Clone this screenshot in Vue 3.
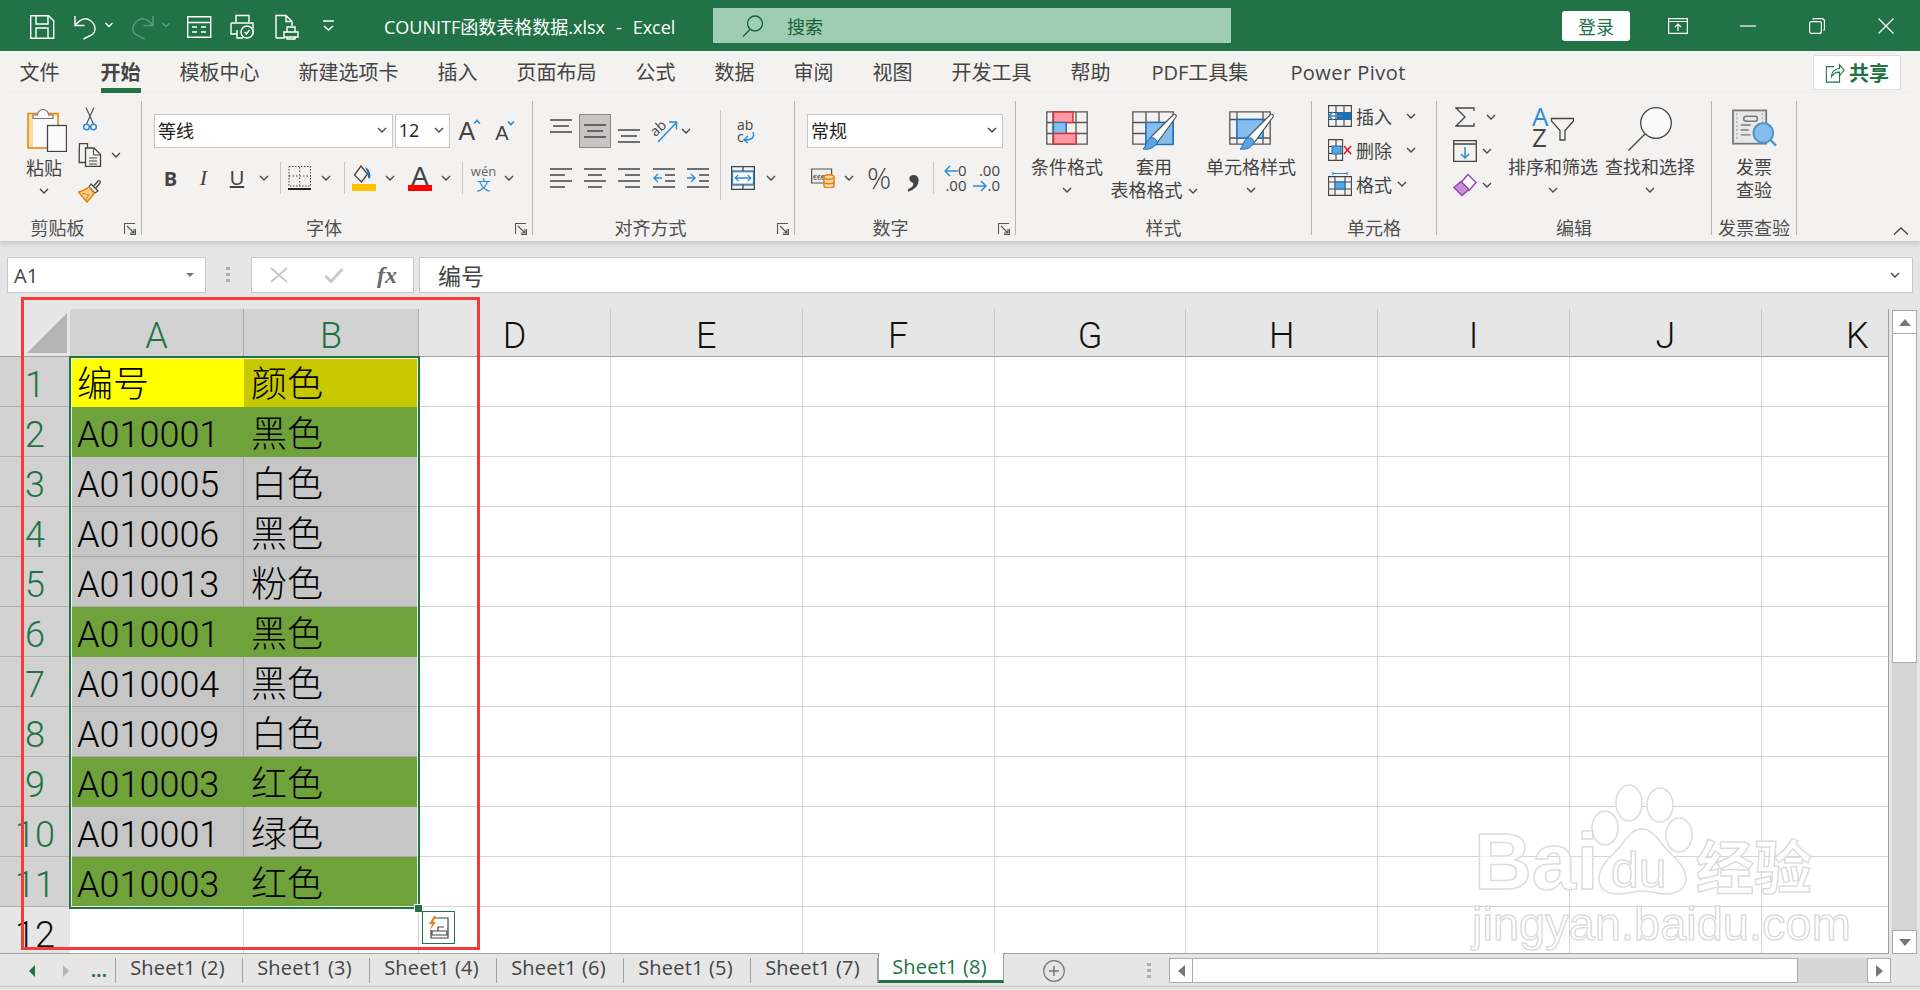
<template>
  <div class="excel">
    <header class="titlebar">
      <svg class="qat" viewBox="25 0 315 51" fill="none" stroke="#fff" stroke-width="1.4">
        <path d="M30.7 15.7h18l5 5v17.6h-23z" />
        <path d="M36 16v8h12v-8M36 38V28h12v10" />
        <path d="M75 16v9.500h9.500M75.500 25c5-6 10-7.500 14-5 7 4 7 12 2 15l-8 4" />
        <path d="M105.500 23l3.500 3.500 3.500-3.500" stroke-width="1.300" />
        <g stroke="#5d9c7b">
          <path d="M153 16v9.500h-9.500M152.500 25c-5-6-10-7.500-14-5-7 4-7 12-2 15l8 4" />
          <path d="M162.500 23l3.500 3.500 3.500-3.500" stroke-width="1.300" />
        </g>
        <path d="M187.700 16.700h23v20.600h-23zM187.700 22.500h23M192 27h5M201 27h5M192 32h5M201 32h5" />
        <path d="M236 22v-6.500h13V22M231 23h22v11h-7M231 23v11h6M237 30v8h6" />
        <circle cx="247" cy="32" r="6" fill="#217346" />
        <path d="M244.500 32l2 2 3-4" />
        <path d="M276 38V15.500h10l6 6V26M286 15.500v6h6M276 38h9" />
        <path d="M284 32h14v5h-14zM287 32v-5h8v5M287 37v2h8v-2" />
        <path d="M323 21h11M324 26l4.500 4 4.500-4" />
      </svg>
      <div class="doc-title">COUNITF函数表格数据.xlsx&nbsp; - &nbsp;Excel</div>
      <div class="search">
        <svg class="search-ico" viewBox="0 0 22 22" fill="none" stroke="#1d5a36" stroke-width="1.300">
          <circle cx="13" cy="8.500" r="7.500" />
          <path d="M8 14.500L1 21.500" />
        </svg>
        <span>搜索</span>
      </div>
      <button class="login">登录</button>
      <svg class="win win-ribbon" viewBox="0 0 20 16" fill="none" stroke="#fff" stroke-width="1.200">
        <path d="M.6.600h18.800v14.800H.6zM.6 3.500h18.800M10 13V6.500M7 9l3-3 3 3" />
      </svg>
      <svg class="win win-min" viewBox="0 0 16 16" fill="none" stroke="#fff" stroke-width="1.200"><path d="M0 8h16" /></svg>
      <svg class="win win-max" viewBox="0 0 16 16" fill="none" stroke="#fff" stroke-width="1.200">
        <rect x=".6" y="3.600" width="11.800" height="11.800" rx="2" />
        <path d="M3.500 1.500c.5-.6 1-.9 2-.9h7c1.700 0 3 1.300 3 3v7c0 1-.3 1.500-.9 2" />
      </svg>
      <svg class="win win-close" viewBox="0 0 16 16" fill="none" stroke="#fff" stroke-width="1.200"><path d="M.5.500l15 15M15.500.500l-15 15" /></svg>
    </header>

    <nav class="tabs">
      <span v-for="t in tabs" :key="t" class="tab" :class="{ on: t === '开始' }">{{ t }}</span>
      <button class="share">
        <svg class="share-ico" viewBox="0 0 22 24" fill="none" stroke="#217346" stroke-width="1.200">
          <path d="M10 5H1.500v17H16v-9" />
          <path d="M7 16c0-5 4-9 9-9V3l5 6-5 6v-4c-4 0-7 1.500-9 5z" />
        </svg>
        共享
      </button>
    </nav>

    <section class="ribbon">
      <!-- 剪贴板 -->
      <div class="group g-clip">
        <div class="body">
          <div class="paste">
            <svg class="ico-paste" viewBox="0 0 40 45">
              <rect x="1" y="6.500" width="30" height="34.500" fill="#fbdf9e" stroke="#e5820e" stroke-width="1.500" />
              <rect x="6" y="9" width="24" height="31" fill="#fafafa" />
              <path d="M6 11.500V8h4.500a5.500 5.500 0 0 1 11 0H26v3.500z" fill="#fafafa" stroke="#777" stroke-width="1.200" />
              <rect x="20.500" y="18.500" width="19" height="26" fill="#fafafa" stroke="#444" stroke-width="1.300" />
            </svg>
            <span class="txt">粘贴</span>
            <Chev />
          </div>
          <div class="clip-tools">
            <svg class="ico-cut" viewBox="0 0 14 24" fill="none" stroke-width="1.200">
              <path d="M3 .500l7.500 16.500M11 .500L3.500 17" stroke="#555" />
              <circle cx="3.500" cy="20" r="2.800" stroke="#2b8dd6" stroke-width="1.500" />
              <circle cx="10.500" cy="20" r="2.800" stroke="#2b8dd6" stroke-width="1.500" />
            </svg>
            <div class="copy-row">
              <svg class="ico-24" viewBox="0 0 24 24" fill="none" stroke="#444" stroke-width="1.300">
                <path d="M7.500 19.500H1.200c0-6 0-12 .3-19h8v4" />
                <path d="M7.500 5h8.500l6.500 6.500v12h-15z" />
                <path d="M15.500 5.500v6.500h7M11 15h8M11 18h8M11 21h8" stroke-width="1" />
              </svg>
              <Chev class="copy-chev" />
            </div>
            <svg class="ico-24 brush" viewBox="0 0 24 24" fill="none">
              <path d="M15 8l5-6c1-1 3 .5 2 2l-5 6z" stroke="#444" stroke-width="1.300" />
              <path d="M13 5l7 7-3 2-6-6z" fill="#fff" stroke="#444" stroke-width="1.200" />
              <path d="M11 8l5 6c-1 3-5 6-7 9L.5 13c3-.5 7-2.500 10.500-5z" fill="#f8cf8e" stroke="#e5820e" stroke-width="1.500" />
              <path d="M4 14l6 2M8 21l3-6" stroke="#e5820e" />
            </svg>
          </div>
        </div>
        <div class="label">剪贴板</div>
        <Launcher />
      </div>

      <!-- 字体 -->
      <div class="group g-font">
        <div class="body col">
          <div class="row-1 font-row">
            <div class="select sel-font">等线<Chev /></div>
            <div class="select sel-size">12<Chev /></div>
            <div class="grow-a">A<svg class="caret" viewBox="0 0 8 5" fill="none" stroke="#2b8dd6" stroke-width="1.600"><path d="M1 4.500L4 1.500l3 3" /></svg></div>
            <div class="grow-a small">A<svg class="caret" viewBox="0 0 8 5" fill="none" stroke="#2b8dd6" stroke-width="1.600"><path d="M1 .500L4 3.500l3-3" /></svg></div>
          </div>
          <div class="row-2 font-tools">
            <b class="fb">B</b>
            <i class="fi">I</i>
            <u class="fu">U</u>
            <Chev />
            <span class="vsep" />
            <svg class="ico-24 tall" viewBox="0 0 24 24" fill="none">
              <path d="M1 .500h21.500V20H1z" stroke="#444" stroke-dasharray="1.500 1.500" />
              <path d="M11.700 1v19M1 10h22" stroke="#444" stroke-dasharray="1.500 2" />
              <path d="M0 23h23" stroke="#222" stroke-width="2" />
            </svg>
            <Chev />
            <span class="vsep" />
            <svg class="ico-24 tall" viewBox="0 0 24 26" fill="none">
              <path d="M9 1L2.500 10l7 7 6-8z" stroke="#444" stroke-width="1.300" />
              <path d="M13 2c3 1 5 4 5.500 9 0 2-1.500 3-2.500 2 .5-4-1-7-3-11z" fill="#1c6fb5" />
              <rect y="19" width="24" height="7" fill="#ffc000" />
            </svg>
            <Chev />
            <div class="font-color">A<span class="bar" /></div>
            <Chev />
            <span class="vsep" />
            <div class="wen"><span>wén</span><em>文</em></div>
            <Chev />
          </div>
        </div>
        <div class="label">字体</div>
        <Launcher />
      </div>

      <!-- 对齐方式 -->
      <div class="group g-align">
        <div class="body">
          <div class="col">
            <div class="row-1 align-1">
              <svg class="ico-lines top" viewBox="0 0 22 14" stroke="#444" stroke-width="1.400"><path d="M0 1h22M3 7h16M0 13h22" /></svg>
              <span class="active-box"><svg class="ico-lines" viewBox="0 0 22 14" stroke="#444" stroke-width="1.400"><path d="M0 1h22M3 7h16M0 13h22" /></svg></span>
              <svg class="ico-lines bottom" viewBox="0 0 22 14" stroke="#444" stroke-width="1.400"><path d="M0 1h22M3 7h16M0 13h22" /></svg>
              <svg class="ico-orient" viewBox="0 0 26 24" fill="none">
                <text x="0" y="14" transform="rotate(-42 7 12)" class="svg-txt" fill="#444">ab</text>
                <path d="M6 23L24 4M17 3h7.500v7.500" stroke="#2b8dd6" stroke-width="1.500" />
              </svg>
              <Chev />
            </div>
            <div class="row-2 align-2">
              <svg class="ico-lines h20" viewBox="0 0 22 20" stroke="#444" stroke-width="1.400"><path d="M0 1h22M0 7h15M0 13h22M0 19h15" /></svg>
              <svg class="ico-lines h20" viewBox="0 0 22 20" stroke="#444" stroke-width="1.400"><path d="M0 1h22M4 7h14M0 13h22M4 19h14" /></svg>
              <svg class="ico-lines h20" viewBox="0 0 22 20" stroke="#444" stroke-width="1.400"><path d="M0 1h22M7 7h15M0 13h22M7 19h15" /></svg>
              <svg class="ico-lines h20" viewBox="0 0 22 20" fill="none" stroke-width="1.400">
                <path d="M0 1h22M12 7h10M12 13h10M0 19h22" stroke="#444" />
                <path d="M9 10H1M5 6l-4 4 4 4" stroke="#2b8dd6" />
              </svg>
              <svg class="ico-lines h20" viewBox="0 0 22 20" fill="none" stroke-width="1.400">
                <path d="M0 1h22M12 7h10M12 13h10M0 19h22" stroke="#444" />
                <path d="M0 10h8M4 6l4 4-4 4" stroke="#2b8dd6" />
              </svg>
            </div>
          </div>
          <span class="vsep long" />
          <div class="col align-right">
            <div class="row-1 wrap-cell">
              <svg class="ico-wrap" viewBox="0 0 20 24" fill="none">
                <text x="1" y="10" class="svg-txt" fill="#444">ab</text>
                <text x="1" y="22" class="svg-txt" fill="#444">c</text>
                <path d="M17 12c2 5-1 8-8 8M12 16l-4 4 4 3" stroke="#2b8dd6" stroke-width="1.500" />
              </svg>
            </div>
            <div class="row-2 merge-cell">
              <svg class="ico-24 tall" viewBox="0 0 23 23" fill="none" stroke="#444" stroke-width="1.200">
                <path d="M.6.600h21.800v21.800H.6zM.6 5h21.800M.6 18h21.800M11.500 1v4M11.500 18v4" />
                <rect x="1.500" y="5.500" width="20" height="12" fill="#fff" stroke="#2b8dd6" />
                <path d="M4 11.500h15M7 8.500l-3 3 3 3M16 8.500l3 3-3 3" stroke="#2b8dd6" />
              </svg>
              <Chev />
            </div>
          </div>
        </div>
        <div class="label">对齐方式</div>
        <Launcher />
      </div>

      <!-- 数字 -->
      <div class="group g-num">
        <div class="body col">
          <div class="row-1 num-row">
            <div class="select sel-num">常规<Chev /></div>
          </div>
          <div class="row-2 num-tools">
            <svg class="ico-24 acct" viewBox="0 0 24 20" fill="none">
              <path d="M.6 1h20v14H.6z" fill="#eee" stroke="#555" stroke-width="1.200" />
              <text x="2" y="12" class="svg-small" fill="#444">€€€</text>
              <path d="M13 9c0-3 10-3 10 0v9c0 2.500-10 2.500-10 0z" fill="#fbd7a5" stroke="#e5820e" stroke-width="1.500" />
              <path d="M13 9c0 3 10 3 10 0M13 13.500c0 3 10 3 10 0" stroke="#e5820e" stroke-width="1.300" />
            </svg>
            <Chev />
            <span class="pct">%</span>
            <span class="comma">,</span>
            <span class="vsep" />
            <div class="dec">
              <div><svg class="dec-arrow" viewBox="0 0 14 12" fill="none" stroke="#2b8dd6" stroke-width="1.500"><path d="M14 6H1M6 1L1 6l5 5" /></svg>0</div>
              <div>.00</div>
            </div>
            <div class="dec">
              <div class="end">.00</div>
              <div><svg class="dec-arrow" viewBox="0 0 14 12" fill="none" stroke="#2b8dd6" stroke-width="1.500"><path d="M0 6h13M8 1l5 5-5 5" /></svg>.0</div>
            </div>
          </div>
        </div>
        <div class="label">数字</div>
        <Launcher />
      </div>

      <!-- 样式 -->
      <div class="group g-style">
        <div class="body styles">
          <div class="big">
            <svg class="big-ico cond" viewBox="0 0 42 34" fill="none">
              <path d="M.8.800h40.400v32.400H.8zM.8 11.500h40.400M.8 22.500h40.400M7 1v32M20 1v32M30 1v32" stroke="#555" stroke-width="1.300" />
              <rect x="7.500" y="1" width="19.500" height="10.500" fill="#ff99a3" stroke="#d92b2b" stroke-width="1.400" />
              <rect x="7.500" y="11.500" width="12.500" height="11" fill="#85bdee" stroke="#1a72bf" stroke-width="1.200" />
              <rect x="7.500" y="22.500" width="22.500" height="10.500" fill="#ff99a3" stroke="#d92b2b" stroke-width="1.400" />
            </svg>
            <span class="txt">条件格式</span>
            <Chev />
          </div>
          <div class="big">
            <svg class="big-ico" viewBox="0 0 45 39" fill="none">
              <path d="M.8.800h40.400v32.400H.8zM.8 11.500h40.400M.8 22.500h40.400M14 1v32M27 1v32" stroke="#555" stroke-width="1.300" />
              <rect x="14" y="11.500" width="27" height="22" fill="#85bdee" stroke="#1a72bf" stroke-width="1.400" />
              <path d="M18 27L41 4c1.500-1.500 4-.5 3 2L25 32z" fill="#fff" stroke="#555" stroke-width="1.200" />
              <path d="M18 27c4-1 7 1 7 5-3 5-8 7-14 6 3-2 3-8 7-11z" fill="#5ba4e0" stroke="#1a72bf" />
            </svg>
            <span class="txt">套用</span>
            <span class="txt with-chev">表格格式<Chev /></span>
          </div>
          <div class="big">
            <svg class="big-ico" viewBox="0 0 45 39" fill="none">
              <path d="M.8.800h40.400v32.400H.8zM.8 8.500h40.400M.8 27h40.400M8 1v32M34 1v32" stroke="#555" stroke-width="1.300" />
              <rect x="8" y="8.500" width="26" height="18.500" fill="#85bdee" stroke="#1a72bf" stroke-width="1.400" />
              <path d="M18 27L41 4c1.500-1.500 4-.5 3 2L25 32z" fill="#fff" stroke="#555" stroke-width="1.200" />
              <path d="M18 27c4-1 7 1 7 5-3 5-8 7-14 6 3-2 3-8 7-11z" fill="#5ba4e0" stroke="#1a72bf" />
            </svg>
            <span class="txt">单元格样式</span>
            <Chev />
          </div>
        </div>
        <div class="label">样式</div>
      </div>

      <!-- 单元格 -->
      <div class="group g-cells">
        <div class="body col cells">
          <div class="cell-btn">
            <svg class="ico-24 tall" viewBox="0 0 24 22" fill="none">
              <path d="M.6.600h22.800v20.800H.6zM.6 7.500h22.800M.6 14.500h22.800M8 1v20M16 1v20" stroke="#444" stroke-width="1.100" />
              <rect x="9" y="7" width="14" height="8" fill="#1c6fb5" />
              <path d="M14 11H1M5 7l-4 4 4 4" stroke="#2b8dd6" stroke-width="1.600" />
            </svg>
            <span>插入</span><Chev />
          </div>
          <div class="cell-btn">
            <svg class="ico-24 tall" viewBox="0 0 24 22" fill="none">
              <path d="M.6.600h14v20.800H.6zM.6 7.500h14M.6 14.500h14M8 1v20" stroke="#444" stroke-width="1.100" />
              <rect x="4" y="7" width="9" height="8" fill="#5ba4e0" stroke="#1c6fb5" />
              <path d="M16 7l7 8M23 7l-7 8" stroke="#e81123" stroke-width="1.500" />
            </svg>
            <span>删除</span><Chev />
          </div>
          <div class="cell-btn short">
            <svg class="ico-24 tall" viewBox="0 0 24 24" fill="none">
              <path d="M.6 4.600h22.800v18.800H.6zM.6 10h22.800M.6 17h22.800M7 5v18M17 5v18" stroke="#444" stroke-width="1.100" />
              <rect x="7" y="10" width="10" height="7" fill="#5ba4e0" stroke="#1c6fb5" />
              <path d="M5 1.500h14M5 0v3M19 0v3" stroke="#2b8dd6" stroke-width="1.200" />
            </svg>
            <span>格式</span><Chev />
          </div>
        </div>
        <div class="label">单元格</div>
      </div>

      <!-- 编辑 -->
      <div class="group g-edit">
        <div class="body edit">
          <div class="col edit-small">
            <div class="edit-btn">
              <svg class="ico-sigma" viewBox="0 0 20 20" fill="none" stroke="#444" stroke-width="1.300"><path d="M19 4V1H1l9 9-9 9h18v-3" /></svg>
              <Chev class="sigma-chev" />
            </div>
            <div class="edit-btn">
              <svg class="ico-24 tall" viewBox="0 0 24 22" fill="none">
                <path d="M.7.700h22.600v20.600H.7zM.7 4h22.600" stroke="#444" stroke-width="1.300" />
                <path d="M12 7v11M8 14l4 4 4-4" stroke="#2b8dd6" stroke-width="1.500" />
              </svg>
              <Chev />
            </div>
            <div class="edit-btn">
              <svg class="ico-24 tall" viewBox="0 0 24 23" fill="none">
                <path d="M15 1l8 8-7 8-8-8z" fill="#fff" stroke="#9c3fb0" stroke-width="1.400" />
                <path d="M8 8l8 8-7 6-8-8z" fill="#c98ed6" stroke="#9c3fb0" stroke-width="1.400" />
              </svg>
              <Chev />
            </div>
          </div>
          <div class="big">
            <svg class="big-ico sort" viewBox="0 0 42 41" fill="none">
              <text x="0" y="19" class="svg-az" fill="#2b8dd6">A</text>
              <text x="0" y="40" class="svg-az" fill="#444">Z</text>
              <path d="M19.500 11.500h22V14L33 23.500V33h-5v-9.500L19.500 14z" stroke="#444" stroke-width="1.300" />
            </svg>
            <span class="txt">排序和筛选</span>
            <Chev />
          </div>
          <div class="big">
            <svg class="big-ico find" viewBox="0 0 44 44" fill="none" stroke="#444" stroke-width="1.300">
              <circle cx="28" cy="16" r="15.300" fill="#fafafa" />
              <path d="M17 27L.5 43.500" />
            </svg>
            <span class="txt">查找和选择</span>
            <Chev />
          </div>
        </div>
        <div class="label">编辑</div>
      </div>

      <!-- 发票查验 -->
      <div class="group g-inv">
        <div class="body">
          <div class="big">
            <svg class="big-ico inv" viewBox="0 0 46 39" fill="none">
              <rect x="1" y="1" width="34" height="34" fill="#e8e8e8" stroke="#777" stroke-width="1.800" />
              <path d="M5 4v28M31 4v14" stroke="#999" stroke-dasharray="2 2" />
              <rect x="12" y="7" width="14" height="5" rx="2.500" stroke="#777" stroke-width="1.500" />
              <path d="M9 16h10M9 21h8M9 26h10" stroke="#777" stroke-width="1.500" />
              <circle cx="32" cy="24" r="10" fill="#85bdee" stroke="#4d93cf" stroke-width="2" />
              <path d="M39 31l6 6" stroke="#4d93cf" stroke-width="2.500" />
            </svg>
            <span class="txt">发票</span>
            <span class="txt">查验</span>
          </div>
        </div>
        <div class="label">发票查验</div>
      </div>

      <svg class="collapse" viewBox="0 0 16 8" fill="none" stroke="#444" stroke-width="1.300"><path d="M1 7.500L8 1l7 6.500" /></svg>
    </section>

    <section class="formula">
      <div class="namebox">
        <span>A1</span>
        <svg class="tri" viewBox="0 0 8 4"><path d="M0 0h8L4 4z" fill="#777" /></svg>
      </div>
      <span class="grip" />
      <div class="fx-box">
        <svg class="fx-x" viewBox="0 0 18 16" fill="none" stroke="#c8c8c8" stroke-width="2"><path d="M1 1l16 14M17 1L1 15" /></svg>
        <svg class="fx-ok" viewBox="0 0 20 16" fill="none" stroke="#c8c8c8" stroke-width="2.800"><path d="M1.500 9l5.500 5.500L18.500 2" /></svg>
        <i class="fx">fx</i>
      </div>
      <div class="fx-input">
        <span>编号</span>
        <Chev />
      </div>
    </section>

    <section class="sheet-wrap">
      <div class="sheet">
        <div class="corner">
          <svg class="corner-tri" viewBox="0 0 40 40"><path d="M40 0v40H0z" fill="#b5b5b5" /></svg>
        </div>
        <div class="col-head sel">A</div>
        <div class="col-head sel last">B</div>
        <div v-for="c in blankCols" :key="c" class="col-head">{{ c }}</div>

        <template v-for="(r, i) in rows" :key="i">
          <div class="row-head" :class="{ sel: i < 11 }">{{ i + 1 }}</div>
          <div class="cell" :class="[r.tone, { first: i === 0 }]">{{ r.code }}</div>
          <div class="cell" :class="[r.tone === 'head' ? 'head2' : r.tone]">{{ r.color }}</div>
          <div v-for="c in blankCols" :key="c" class="cell" />
        </template>

        <div class="selection" />
        <div class="fill-handle" />
        <div class="quick">
          <svg class="quick-ico" viewBox="0 0 22 24" fill="none">
            <path d="M6 2h14v20H3V14" stroke="#444" stroke-width="1.200" />
            <path d="M10 15v-4h6M4 15h15v4H4z" stroke="#444" stroke-width="1.200" />
            <path d="M6 0L1 8h3l-2 6 6-8H5l3-6z" fill="#e5820e" />
          </svg>
        </div>
      </div>
      <aside class="vscroll">
        <button class="sb-btn"><svg class="sb-arr" viewBox="0 0 12 7"><path d="M0 7L6 0l6 7z" fill="#777" /></svg></button>
        <div class="sb-thumb" />
        <div class="sb-track" />
        <button class="sb-btn"><svg class="sb-arr" viewBox="0 0 12 7"><path d="M0 0h12L6 7z" fill="#777" /></svg></button>
      </aside>
    </section>

    <footer class="sheetbar">
      <div class="sheet-nav">
        <svg class="nav-arr" viewBox="0 0 6 12"><path d="M6 0v12L0 6z" fill="#217346" /></svg>
        <svg class="nav-arr" viewBox="0 0 6 12"><path d="M0 0v12l6-6z" fill="#b5b5b5" /></svg>
        <span class="dots">...</span>
      </div>
      <span v-for="s in sheets" :key="s" class="sheet-tab">{{ s }}</span>
      <span class="sheet-tab active">Sheet1 (8)</span>
      <svg class="add" viewBox="0 0 22 22" fill="none" stroke="#777" stroke-width="1.200">
        <circle cx="11" cy="11" r="10.300" />
        <path d="M11 6v10M6 11h10" stroke-width="1.500" />
      </svg>
      <span class="grip" />
      <div class="hscroll">
        <button class="sb-btn"><svg class="sb-arr-h" viewBox="0 0 7 12"><path d="M7 0v12L0 6z" fill="#777" /></svg></button>
        <div class="hs-thumb" />
        <div class="hs-track" />
        <button class="sb-btn"><svg class="sb-arr-h" viewBox="0 0 7 12"><path d="M0 0v12l7-6z" fill="#777" /></svg></button>
      </div>
    </footer>

    <!-- 标注框 -->
    <div class="red-box" />

    <!-- 水印 -->
    <div class="watermark">
      <svg class="wm-paw" viewBox="1590 780 110 120" fill="#fff" stroke="#dcdcdc" stroke-width="1.500">
        <ellipse cx="1629" cy="803" rx="13" ry="18" />
        <ellipse cx="1660" cy="805" rx="13" ry="17" />
        <ellipse cx="1605" cy="828" rx="13" ry="17" />
        <ellipse cx="1679" cy="835" rx="13" ry="17" />
        <path d="M1642 829c-12 0-18 14-26 22-8 8-17 16-17 28 0 10 8 15 20 15 9 0 14-3 23-3s15 3 24 3c12 0 20-6 20-15 0-12-10-20-18-28-8-8-14-22-26-22z" />
      </svg>
      <span class="wm wm-bai">Bai</span>
      <span class="wm wm-du">du</span>
      <span class="wm wm-cn">经验</span>
      <span class="wm wm-url">jingyan.baidu.com</span>
    </div>
  </div>
</template>

<script setup>
import { h } from 'vue'

// 小箭头和右下角的扩展按钮到处都在用
const Chev = () =>
  h('svg', { class: 'chev', viewBox: '0 0 10 6', width: 10, height: 6, fill: 'none', stroke: '#444', 'stroke-width': 1.3 }, [
    h('path', { d: 'M1 1l4 4 4-4' })
  ])

const Launcher = () =>
  h('svg', { class: 'launcher', viewBox: '0 0 12 12', width: 12, height: 12, fill: 'none', stroke: '#555', 'stroke-width': 1.1 }, [
    h('path', { d: 'M11.500 6v5.500H6M.5 11V.5H11M3 3l7 7M10 6v4H6' })
  ])

const tabs = ['文件', '开始', '模板中心', '新建选项卡', '插入', '页面布局', '公式', '数据', '审阅', '视图', '开发工具', '帮助', 'PDF工具集', 'Power Pivot']

const blankCols = ['D', 'E', 'F', 'G', 'H', 'I', 'J', 'K']

const rows = [
  { code: '编号', color: '颜色', tone: 'head' },
  { code: 'A010001', color: '黑色', tone: 'green' },
  { code: 'A010005', color: '白色', tone: 'grey' },
  { code: 'A010006', color: '黑色', tone: 'grey' },
  { code: 'A010013', color: '粉色', tone: 'grey' },
  { code: 'A010001', color: '黑色', tone: 'green' },
  { code: 'A010004', color: '黑色', tone: 'grey' },
  { code: 'A010009', color: '白色', tone: 'grey' },
  { code: 'A010003', color: '红色', tone: 'green' },
  { code: 'A010001', color: '绿色', tone: 'grey' },
  { code: 'A010003', color: '红色', tone: 'green' },
  { code: '', color: '', tone: '' }
]

const sheets = ['Sheet1 (2)', 'Sheet1 (3)', 'Sheet1 (4)', 'Sheet1 (6)', 'Sheet1 (5)', 'Sheet1 (7)']
</script>

<style>
html,
body {
  margin: 0;
  background: #e6e6e6;
}
.chev {
  flex: none;
  display: block;
}
.launcher {
  position: absolute;
  right: 5px;
  bottom: 0;
}
</style>

<style scoped>
.excel {
  position: relative;
  width: 1920px;
  height: 990px;
  overflow: hidden;
  background: #e6e6e6;
  font-family: "Open Sans", "Noto Sans CJK SC", sans-serif;
  color: #444;
}
button {
  font-family: inherit;
  padding: 0;
  border: 0;
}
svg {
  display: block;
  flex: none;
}

/* 标题栏 */
.titlebar {
  height: 51px;
  background: #217346;
  display: flex;
  align-items: center;
  padding-left: 25px;
  box-sizing: border-box;
}
.qat {
  width: 315px;
  height: 51px;
}
.doc-title {
  width: 329px;
  margin-left: 44px;
  color: #fff;
  font-size: 18px;
  word-spacing: 0.8px;
  white-space: nowrap;
}
.search {
  width: 518px;
  height: 35px;
  background: #9fcdb4;
  display: flex;
  align-items: center;
  color: #1d5a36;
  font-size: 18px;
  padding-left: 29px;
  box-sizing: border-box;
}
.search-ico {
  width: 22px;
  height: 22px;
  margin-right: 23px;
}
.login {
  width: 68px;
  height: 30px;
  margin-left: 331px;
  background: #fff;
  color: #217346;
  border-radius: 3px;
  font-size: 18px;
}
.win-ribbon {
  width: 20px;
  height: 16px;
  margin-left: 38px;
}
.win-min {
  width: 16px;
  height: 16px;
  margin-left: 52px;
}
.win-max {
  width: 16px;
  height: 16px;
  margin-left: 53px;
}
.win-close {
  width: 16px;
  height: 16px;
  margin-left: 53px;
}

/* 选项卡 */
.tabs {
  height: 42px;
  background: #f3f2f1;
  display: flex;
  gap: 39px;
  padding-left: 19.5px;
  box-sizing: border-box;
  font-size: 20px;
}
.tab {
  height: 42px;
  box-sizing: border-box;
  padding-top: 8px;
  line-height: 28px;
  white-space: nowrap;
}
.tab:first-child {
  margin-right: 2px;
}
.tab:nth-child(13) {
  margin-left: 2px;
}
.tab:nth-child(14) {
  margin-left: 3px;
  letter-spacing: 0.45px;
}
.tab.on {
  font-weight: 700;
  border-bottom: 5px solid #217346;
}
.share {
  position: absolute;
  top: 55px;
  left: 1813px;
  width: 88px;
  height: 35px;
  background: #fff;
  border: 1px solid #e1dfdd;
  border-radius: 2px;
  color: #217346;
  font-size: 20px;
  font-weight: 700;
  display: flex;
  align-items: center;
  padding-left: 11px;
  gap: 4px;
  box-sizing: border-box;
}
.share-ico {
  width: 20px;
  height: 22px;
}

/* 功能区 */
.ribbon {
  position: relative;
  height: 148px;
  background: #f3f2f1;
  display: flex;
  padding-top: 8px;
  box-sizing: border-box;
  box-shadow: 0 3px 5px rgba(0, 0, 0, 0.14);
  z-index: 2;
  font-size: 18px;
}
.group {
  position: relative;
  height: 134px;
  box-sizing: border-box;
  border-right: 1px solid #b8b8b8;
  flex: none;
}
.body {
  height: 117px;
  display: flex;
}
.col {
  display: flex;
  flex-direction: column;
}
.label {
  line-height: 20px;
  height: 17px;
  text-align: center;
  white-space: nowrap;
  color: #505050;
}
.txt {
  line-height: 23px;
  white-space: nowrap;
}
.vsep {
  display: block;
  width: 1px;
  height: 32px;
  background: #c8c6c4;
}
.vsep.long {
  height: 90px;
  margin-top: 9px;
}
.g-clip { width: 142px; }
.g-font { width: 391px; }
.g-align { width: 262px; }
.g-num { width: 221px; }
.g-style { width: 296px; }
.g-cells { width: 125px; }
.g-edit { width: 275px; }
.g-inv { width: 85px; }
.g-clip .label,
.g-font .label,
.g-align .label,
.g-num .label { padding-right: 26px; }
.g-num .label { padding-right: 29px; }

.row-1 {
  height: 34px;
  margin-top: 13px;
}
.row-2 {
  height: 34px;
  margin-top: 13px;
  display: grid;
  align-items: center;
  justify-items: center;
}

/* 剪贴板 */
.paste {
  width: 48px;
  margin-left: 20px;
  display: flex;
  flex-direction: column;
  align-items: center;
  padding-top: 6px;
}
.ico-paste {
  width: 40px;
  height: 45px;
  margin-left: 6px;
  margin-bottom: 5px;
}
.paste .chev {
  margin-top: 8px;
}
.clip-tools {
  margin-left: 10px;
  padding-top: 6px;
}
.ico-cut {
  width: 14px;
  height: 24px;
  margin-left: 5px;
}
.copy-row {
  display: flex;
  align-items: center;
  margin-top: 12px;
}
.copy-chev {
  margin-left: 9px;
}
.ico-24 {
  width: 24px;
  height: 24px;
}
.brush {
  margin-top: 12px;
}

/* 字体 */
.font-row {
  display: flex;
  padding-left: 12px;
}
.select {
  height: 34px;
  box-sizing: border-box;
  background: #fff;
  border: 1px solid #c8c6c4;
  display: flex;
  align-items: center;
  justify-content: space-between;
  padding: 0 5px 2px 3px;
  color: #222;
  font-size: 18px;
}
.sel-font { width: 240px; }
.sel-size { width: 56px; margin-left: 2px; }
.grow-a {
  position: relative;
  font-size: 25px;
  line-height: 34px;
  margin-left: 8px;
  width: 37px;
  font-family: "Liberation Sans", sans-serif;
}
.grow-a.small {
  font-size: 20px;
  margin-left: 0;
  padding-top: 2px;
  box-sizing: border-box;
}
.caret {
  position: absolute;
  top: 5px;
  left: 15px;
  width: 8px;
  height: 5px;
}
.grow-a.small .caret {
  left: 12px;
  top: 7px;
}
.font-tools {
  grid-template-columns: 35px 31px 36px 18px 15px 24px 28px 8px 32px 20px 40px 12px 20px 23px 28px;
  padding-left: 11px;
}
.fb, .fi, .fu {
  font-family: "Liberation Sans", sans-serif;
  font-size: 20px;
}
.fb { font-family: "Open Sans", sans-serif; }
.fi { font-family: "Liberation Serif", serif; font-size: 22px; }
.ico-24.tall { height: 26px; }
.font-color {
  position: relative;
  width: 24px;
  height: 26px;
  text-align: center;
  font-size: 26px;
  line-height: 22px;
  font-family: "Liberation Sans", sans-serif;
}
.bar {
  position: absolute;
  left: 0;
  bottom: 0;
  width: 24px;
  height: 6px;
  background: #ff0000;
}
.wen {
  text-align: center;
  line-height: 14px;
  font-size: 13px;
  color: #666;
  white-space: nowrap;
}
.wen em {
  display: block;
  font-style: normal;
  color: #2b8dd6;
  font-size: 14px;
}

/* 对齐 */
.g-align .body {
  width: 261px;
}
.g-align .col:first-child {
  width: 187px;
}
.align-1 {
  display: grid;
  grid-template-columns: 34px 34px 34px 37px 6px;
  padding-left: 11px;
  align-items: center;
  justify-items: center;
}
.align-2 {
  grid-template-columns: 34px 34px 34px 36px 32px;
  padding-left: 11px;
}
.ico-lines {
  width: 22px;
  height: 14px;
}
.ico-lines.h20 { height: 20px; }
.ico-lines.top { margin-top: -11px; }
.ico-lines.bottom { margin-top: 10px; }
.active-box {
  width: 32px;
  height: 34px;
  box-sizing: border-box;
  background: #c8c6c4;
  border: 1px solid #8a8886;
  display: flex;
  align-items: center;
  justify-content: center;
}
.ico-orient {
  width: 26px;
  height: 24px;
  overflow: visible;
}
.svg-txt {
  font-family: "Open Sans", sans-serif;
  font-size: 14px;
}
.svg-small {
  font-family: "Liberation Sans", sans-serif;
  font-size: 7px;
}
.svg-az {
  font-family: "Open Sans", sans-serif;
  font-size: 26px;
}
.align-right {
  width: 73px;
}
.wrap-cell {
  padding-left: 15px;
  display: flex;
  align-items: flex-start;
  padding-top: 6px;
  box-sizing: border-box;
}
.ico-wrap {
  width: 20px;
  height: 24px;
}
.merge-cell {
  display: flex;
  align-items: center;
  justify-content: flex-start;
  padding-left: 10px;
  gap: 11px;
}

/* 数字 */
.num-row {
  padding-left: 12px;
}
.sel-num { width: 196px; }
.num-tools {
  grid-template-columns: 40px 12px 48px 22px 16px 25px 42px;
  padding-left: 8px;
}
.acct { height: 20px; }
.pct {
  font-size: 30px;
  font-family: "Open Sans", sans-serif;
  font-weight: 300;
  line-height: 34px;
}
.comma {
  font-family: "Liberation Serif", serif;
  font-weight: 700;
  font-size: 54px;
  line-height: 20px;
  margin-top: -26px;
}
.dec {
  font-family: "Open Sans", sans-serif;
  font-size: 15px;
  line-height: 15px;
  width: 26px;
}
.dec div {
  display: flex;
  align-items: center;
  justify-content: flex-end;
}
.dec-arrow {
  width: 14px;
  height: 12px;
}

/* 样式、编辑 大按钮 */
.styles {
  display: grid;
  grid-template-columns: 96px 78px 116px;
  padding-left: 3px;
}
.big {
  display: flex;
  flex-direction: column;
  align-items: center;
  white-space: nowrap;
  padding-top: 10px;
}
.big-ico {
  width: 45px;
  height: 39px;
  margin-bottom: 6px;
}
.big-ico.cond {
  width: 42px;
  height: 34px;
  margin-bottom: 11px;
}
.big-ico.sort {
  width: 42px;
  height: 41px;
  margin-top: -4px;
  margin-bottom: 8px;
}
.big-ico.find {
  width: 44px;
  height: 44px;
  margin-top: -4px;
  margin-bottom: 5px;
}
.big .chev {
  margin-top: 8px;
}
.with-chev {
  display: flex;
  align-items: center;
  gap: 5px;
  margin-left: 0;
}
.with-chev .chev {
  margin-top: 0;
}

/* 单元格 */
.cells {
  margin-top: -2px;
  height: 119px;
}
.cell-btn {
  height: 34px;
  display: flex;
  align-items: center;
  padding-left: 16px;
}
.cell-btn span {
  margin-left: 4px;
  width: 50px;
}
.cell-btn.short span {
  width: 41px;
}
.edit {
  display: grid;
  grid-template-columns: 68px 96px 98px;
}
.edit-small {
  padding-left: 16px;
  margin-top: -1px;
}
.edit-btn {
  height: 34px;
  display: flex;
  align-items: center;
  gap: 5px;
}
.ico-sigma {
  width: 20px;
  height: 20px;
  margin-left: 2px;
}
.sigma-chev {
  margin-left: 6px;
}
.g-inv .body {
  justify-content: center;
}
.inv {
  margin-top: -2px;
  margin-bottom: 8px;
}
.collapse {
  position: absolute;
  right: 11px;
  bottom: 6px;
  width: 16px;
  height: 8px;
}

/* 编辑栏 */
.formula {
  height: 68px;
  padding: 16px 0 0 7px;
  box-sizing: border-box;
  display: flex;
  align-items: flex-start;
}
.namebox {
  width: 199px;
  height: 36px;
  box-sizing: border-box;
  background: #fff;
  border: 1px solid #c8c8c8;
  display: flex;
  align-items: center;
  justify-content: space-between;
  padding: 0 11px 0 6px;
  font-size: 20px;
}
.tri {
  width: 8px;
  height: 4px;
}
.grip {
  width: 4px;
  height: 16px;
  margin: 10px 21px 0 20px;
  background: repeating-linear-gradient(#b0b0b0 0 3px, transparent 3px 6px);
}
.fx-box {
  width: 163px;
  height: 36px;
  box-sizing: border-box;
  background: #fff;
  border: 1px solid #c8c8c8;
  display: flex;
  align-items: center;
  padding-left: 18px;
}
.fx-x { width: 18px; height: 16px; }
.fx-ok { width: 20px; height: 16px; margin-left: 36px; }
.fx {
  font-family: "Liberation Serif", serif;
  font-weight: 700;
  font-size: 24px;
  color: #6a6a6a;
  margin-left: 33px;
  line-height: 30px;
}
.fx-input {
  width: 1494px;
  height: 36px;
  margin-left: 5px;
  box-sizing: border-box;
  background: #fff;
  border: 1px solid #c8c8c8;
  display: flex;
  align-items: center;
  justify-content: space-between;
  padding: 0 12px 0 18px;
  font-size: 23px;
  color: #444;
}

/* 表格 */
.sheet-wrap {
  display: flex;
  height: 645px;
}
.sheet {
  position: relative;
  width: 1889px;
  height: 645px;
  box-sizing: border-box;
  display: grid;
  grid-template-columns: 70px 174px 175px repeat(8, 191.85px);
  grid-template-rows: 48px repeat(11, 50px) 47px;
  overflow: hidden;
  border-right: 1px solid #a0a0a0;
  border-bottom: 1px solid #a0a0a0;
  background: #fff;
}
.corner {
  background: #e6e6e6;
  border-bottom: 1px solid #a0a0a0;
  padding: 4px 0 0 27px;
  box-sizing: border-box;
}
.corner-tri {
  width: 40px;
  height: 40px;
}
.col-head {
  background: #e6e6e6;
  box-sizing: border-box;
  border-right: 1px solid #c8c8c8;
  border-bottom: 1px solid #a0a0a0;
  color: #111;
  text-align: center;
  font-family: Roboto, "Liberation Sans", sans-serif;
  font-weight: 300;
  font-size: 36px;
  line-height: 54px;
}
.col-head.sel {
  background: #d2d2d2;
  color: #217346;
  border-right-color: #ababab;
}
.col-head.last {
  box-shadow: 2px 0 0 #ababab;
}
.row-head {
  background: #e6e6e6;
  box-sizing: border-box;
  border-bottom: 1px solid #c8c8c8;
  color: #111;
  text-align: center;
  font-family: Roboto, "Liberation Sans", sans-serif;
  font-weight: 300;
  font-size: 36px;
  line-height: 57px;
  overflow: hidden;
}
.row-head.sel {
  background: #d2d2d2;
  color: #217346;
  border-bottom-color: #b0b0b0;
}
.cell {
  box-sizing: border-box;
  border-right: 1px solid #d4d4d4;
  border-bottom: 1px solid #d4d4d4;
  padding-left: 7px;
  font-family: Roboto, "Noto Sans CJK SC", sans-serif;
  font-weight: 300;
  font-size: 36px;
  line-height: 57px;
  color: #000;
  white-space: nowrap;
  overflow: hidden;
}
.cell.head {
  background: #ffff00;
  border-color: transparent;
}
.cell.head2 {
  background: #c8c800;
  border-color: transparent;
}
.cell.green {
  background: #70a23b;
  border-color: #70a23b;
}
.cell.grey {
  background: #c6c6c6;
  border-color: #aaaaaa;
}
.selection {
  position: absolute;
  left: 69px;
  top: 47px;
  width: 351px;
  height: 553px;
  box-sizing: border-box;
  border: 2px solid #217346;
  box-shadow: inset 0 0 0 1px rgba(255, 255, 255, 0.85);
  pointer-events: none;
}
.fill-handle {
  position: absolute;
  left: 414px;
  top: 595px;
  width: 9px;
  height: 9px;
  background: #217346;
  border: 1px solid #fff;
  box-sizing: border-box;
}
.quick {
  position: absolute;
  left: 422px;
  top: 602px;
  width: 33px;
  height: 33px;
  box-sizing: border-box;
  background: #fff;
  border: 1px solid #217346;
  display: flex;
  align-items: center;
  justify-content: center;
}
.quick-ico {
  width: 22px;
  height: 24px;
}
.vscroll {
  width: 31px;
  padding: 1px 3px 0 3px;
  box-sizing: border-box;
  display: flex;
  flex-direction: column;
}
.sb-btn {
  background: #fff;
  border: 1px solid #ababab;
  box-sizing: border-box;
  display: flex;
  align-items: center;
  justify-content: center;
  flex: none;
}
.vscroll .sb-btn {
  width: 25px;
  height: 24px;
}
.sb-arr {
  width: 12px;
  height: 7px;
}
.sb-arr-h {
  width: 7px;
  height: 12px;
}
.sb-thumb {
  height: 329px;
  background: #fff;
  border: 1px solid #ababab;
  border-top: 0;
  box-sizing: border-box;
}
.sb-track {
  flex: 1;
  background: #d6d6d6;
}

/* 工作表标签 */
.sheetbar {
  height: 33px;
  display: flex;
  align-items: flex-start;
  border-bottom: 1px solid #c8c8c8;
  box-sizing: border-box;
  font-size: 20px;
  letter-spacing: 0.2px;
  color: #444;
}
.sheet-nav {
  width: 116px;
  height: 25px;
  margin-top: 4px;
  box-sizing: border-box;
  border-right: 1px solid #a0a0a0;
  display: flex;
  align-items: center;
  padding-left: 29px;
}
.nav-arr {
  width: 6px;
  height: 12px;
}
.nav-arr + .nav-arr {
  margin-left: 28px;
}
.dots {
  color: #217346;
  font-weight: 700;
  margin-left: 22px;
  line-height: 25px;
  font-size: 18px;
}
.sheet-tab {
  width: 127px;
  height: 25px;
  margin-top: 4px;
  padding-right: 3px;
  box-sizing: border-box;
  border-right: 1px solid #a0a0a0;
  text-align: center;
  line-height: 20px;
  white-space: nowrap;
}
.sheet-tab.active {
  width: 126px;
  height: 30px;
  margin-top: -1px;
  background: #fff;
  color: #217346;
  border: 1px solid #a0a0a0;
  border-top: 0;
  border-bottom: 3px solid #217346;
  line-height: 27px;
  position: relative;
}
.add {
  width: 22px;
  height: 22px;
  margin: 6px 0 0 39px;
}
.sheetbar .grip {
  margin: 9px 0 0 82px;
}
.hscroll {
  display: flex;
  width: 722px;
  height: 25px;
  margin: 4px 0 0 18px;
}
.hscroll .sb-btn {
  width: 24px;
  height: 25px;
}
.hs-thumb {
  width: 605px;
  height: 25px;
  box-sizing: border-box;
  background: #fff;
  border: 1px solid #ababab;
  border-left: 0;
}
.hs-track {
  flex: 1;
  background: #d6d6d6;
  height: 25px;
}

/* 红框 */
.red-box {
  position: absolute;
  left: 21px;
  top: 297px;
  width: 459px;
  height: 653px;
  box-sizing: border-box;
  border: 3px solid #f53a3a;
  pointer-events: none;
}

/* 水印 */
.watermark {
  position: absolute;
  inset: 0;
  pointer-events: none;
  filter: blur(0.4px);
}
.wm-paw {
  position: absolute;
  left: 1590px;
  top: 780px;
  width: 110px;
  height: 120px;
}
.wm {
  position: absolute;
  color: rgba(255, 255, 255, 0.75);
  -webkit-text-stroke: 1.5px #dcdcdc;
  white-space: nowrap;
  font-family: "Liberation Sans", sans-serif;
  font-weight: 700;
}
.wm-bai {
  left: 1474px;
  top: 816px;
  font-size: 80px;
  line-height: 92px;
}
.wm-du {
  left: 1611px;
  top: 840px;
  font-size: 50px;
  line-height: 60px;
  font-weight: 400;
}
.wm-cn {
  left: 1696px;
  top: 825px;
  font-size: 58px;
  line-height: 78px;
  font-family: "Noto Sans CJK SC", sans-serif;
}
.wm-url {
  left: 1472px;
  top: 897px;
  font-size: 47px;
  line-height: 54px;
  font-weight: 400;
}
</style>
